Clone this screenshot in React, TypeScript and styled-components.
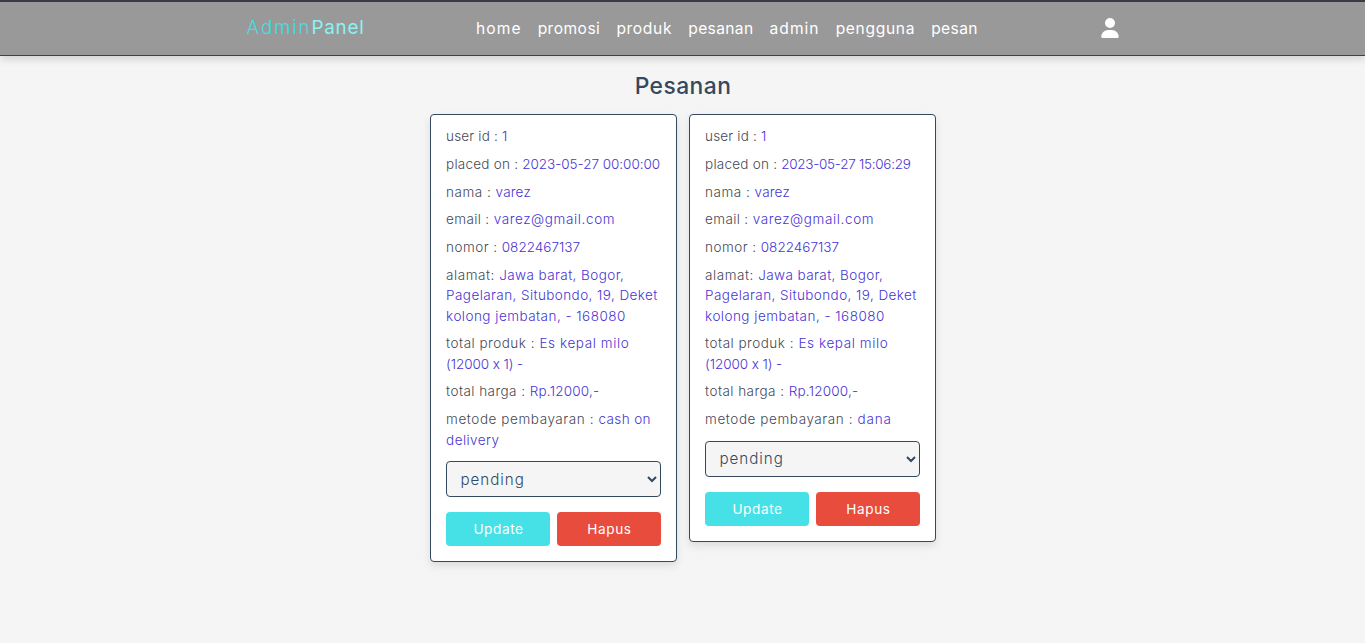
import React from "react";
import styled, { createGlobalStyle } from "styled-components";
import { FaUser } from "react-icons/fa6";

const GlobalStyle = createGlobalStyle`
  * { box-sizing: border-box; margin: 0; padding: 0; }
  body {
    background: #f5f5f5;
    color: #34495e;
    font-family: Inter, "Liberation Sans", sans-serif;
    font-weight: 300;
  }
`;

const Page = styled.div`
  min-height: 643px;
`;

const Header = styled.header`
  height: 56px;
  background: #999;
  border-top: 2px solid #3b3b48;
  border-bottom: 1px solid #34425a;
  box-shadow: 0 3px 8px rgba(0, 0, 0, 0.15);
`;

const HeaderInner = styled.div`
  width: 872px;
  height: 100%;
  margin: 0 auto;
  display: flex;
  align-items: center;
  justify-content: space-between;
`;

const Logo = styled.a`
  width: 229.5px;
  padding-bottom: 1px;
  font-size: 18.8px;
  line-height: 24px;
  white-space: nowrap;
`;

const Text = styled.span<{ $track: number }>`
  letter-spacing: ${(p) => p.$track}px;
`;

const LogoPart = styled(Text)<{ $color: string; $weight: number }>`
  color: ${(p) => p.$color};
  font-weight: ${(p) => p.$weight};
`;

const Nav = styled.nav`
  flex: 1;
  display: flex;
  gap: 16.1px;
  font-size: 15.6px;
  font-weight: 400;
  line-height: 22px;
  color: #fff;
`;

const UserIcon = styled(FaUser)`
  width: 18px;
  height: 20px;
  margin-bottom: 1px;
  color: #fff;
`;

const Main = styled.main`
  display: flex;
  flex-direction: column;
  align-items: center;
`;

const Title = styled.h1`
  margin: 15px 0 13px;
  padding-left: 1px;
  font-size: 22.8px;
  line-height: 30px;
  font-weight: 500;
`;

const Cards = styled.section`
  display: flex;
  align-items: flex-start;
  gap: 12px;
`;

const Card = styled.article`
  width: 247px;
  padding: 11px 15px 15px;
  background: #fff;
  border: 1px solid #34495e;
  border-radius: 4px;
  box-shadow: 0 4px 8px rgba(0, 0, 0, 0.1);
`;

const Field = styled.p`
  margin-bottom: 7.35px;
  padding-left: 0.6px;
  font-size: 13.5px;
  line-height: 20.4px;
  color: #464a56;
  white-space: pre;
`;

const Value = styled(Text)`
  color: #4834d4;
`;

const Select = styled.select`
  display: block;
  width: 100%;
  height: 36px;
  margin-top: 11px;
  padding: 0 11px 0 10px;
  font: 300 15.2px Inter, sans-serif;
  letter-spacing: 0.95px;
  color: #34495e;
  background: #f5f5f5;
  border: 1px solid #34495e;
  border-radius: 4px;
`;

const Actions = styled.div`
  display: flex;
  gap: 7px;
  margin-top: 15px;
`;

const Button = styled.button<{ $bg: string }>`
  flex: 1;
  height: 34px;
  padding-left: 2px;
  border: 0;
  border-radius: 4px;
  background: ${(p) => p.$bg};
  color: #fff;
  font: 400 13.6px Inter, sans-serif;
  letter-spacing: 0.6px;
`;

type Line = [text: string, track: number];
interface FieldData {
  label: Line;
  lines: Line[];
}

const navItems: Line[] = [
  ["home", 1.05],
  ["promosi", 0.45],
  ["produk", 0.65],
  ["pesanan", 0.35],
  ["admin", 1],
  ["pengguna", 0.65],
  ["pesan", 0.4],
];

const makeOrder = (placedOn: Line, payment: Line[]): FieldData[] => [
  { label: ["user id : ", 0.17], lines: [["1", 0]] },
  { label: ["placed on : ", 0.23], lines: [placedOn] },
  { label: ["nama : ", 0.5], lines: [["varez", 0.2]] },
  { label: ["email : ", 0.35], lines: [["varez@gmail.com", 0.62]] },
  { label: ["nomor : ", 0.46], lines: [["0822467137", 0.02]] },
  {
    label: ["alamat: ", 0.53],
    lines: [
      ["Jawa barat, Bogor,", 0.42],
      ["Pagelaran, Situbondo, 19, Deket", 0.42],
      ["kolong jembatan, - 168080", 0.47],
    ],
  },
  {
    label: ["total produk : ", 0.5],
    lines: [
      ["Es kepal milo", 0.6],
      ["(12000 x 1) -", -0.08],
    ],
  },
  { label: ["total harga : ", 0.45], lines: [["Rp.12000,-", 0.2]] },
  { label: ["metode pembayaran : ", 0.57], lines: payment },
];

const orders: FieldData[][] = [
  makeOrder(["2023-05-27 00:00:00", -0.03], [["cash on", 0.4], ["delivery", 0.42]]),
  makeOrder(["2023-05-27 15:06:29", -0.28], [["dana", 0.9]]),
];

const OrderCard = ({ fields }: { fields: FieldData[] }) => (
  <Card>
    {fields.map(({ label, lines }) => (
      <Field key={label[0]}>
        <Text $track={label[1]}>{label[0]}</Text>
        {lines.map(([text, track], i) => (
          <React.Fragment key={text}>
            {i > 0 && <br />}
            <Value $track={track}>{text}</Value>
          </React.Fragment>
        ))}
      </Field>
    ))}
    <Select defaultValue="pending">
      <option value="pending">pending</option>
      <option value="selesai">selesai</option>
    </Select>
    <Actions>
      <Button $bg="#46e1e6">Update</Button>
      <Button $bg="#e84c3d">Hapus</Button>
    </Actions>
  </Card>
);

const App = () => (
  <Page>
    <GlobalStyle />
    <Header>
      <HeaderInner>
        <Logo>
          <LogoPart $color="#48dce2" $weight={300} $track={1.85}>Admin</LogoPart>
          <LogoPart $color="#8af3f3" $weight={400} $track={0.8}>Panel</LogoPart>
        </Logo>
        <Nav>
          {navItems.map(([text, track]) => (
            <Text key={text} $track={track}>{text}</Text>
          ))}
        </Nav>
        <UserIcon />
      </HeaderInner>
    </Header>
    <Main>
      <Title>
        <Text $track={0.45}>Pesanan</Text>
      </Title>
      <Cards>
        {orders.map((fields, i) => (
          <OrderCard key={i} fields={fields} />
        ))}
      </Cards>
    </Main>
  </Page>
);

export default App;
